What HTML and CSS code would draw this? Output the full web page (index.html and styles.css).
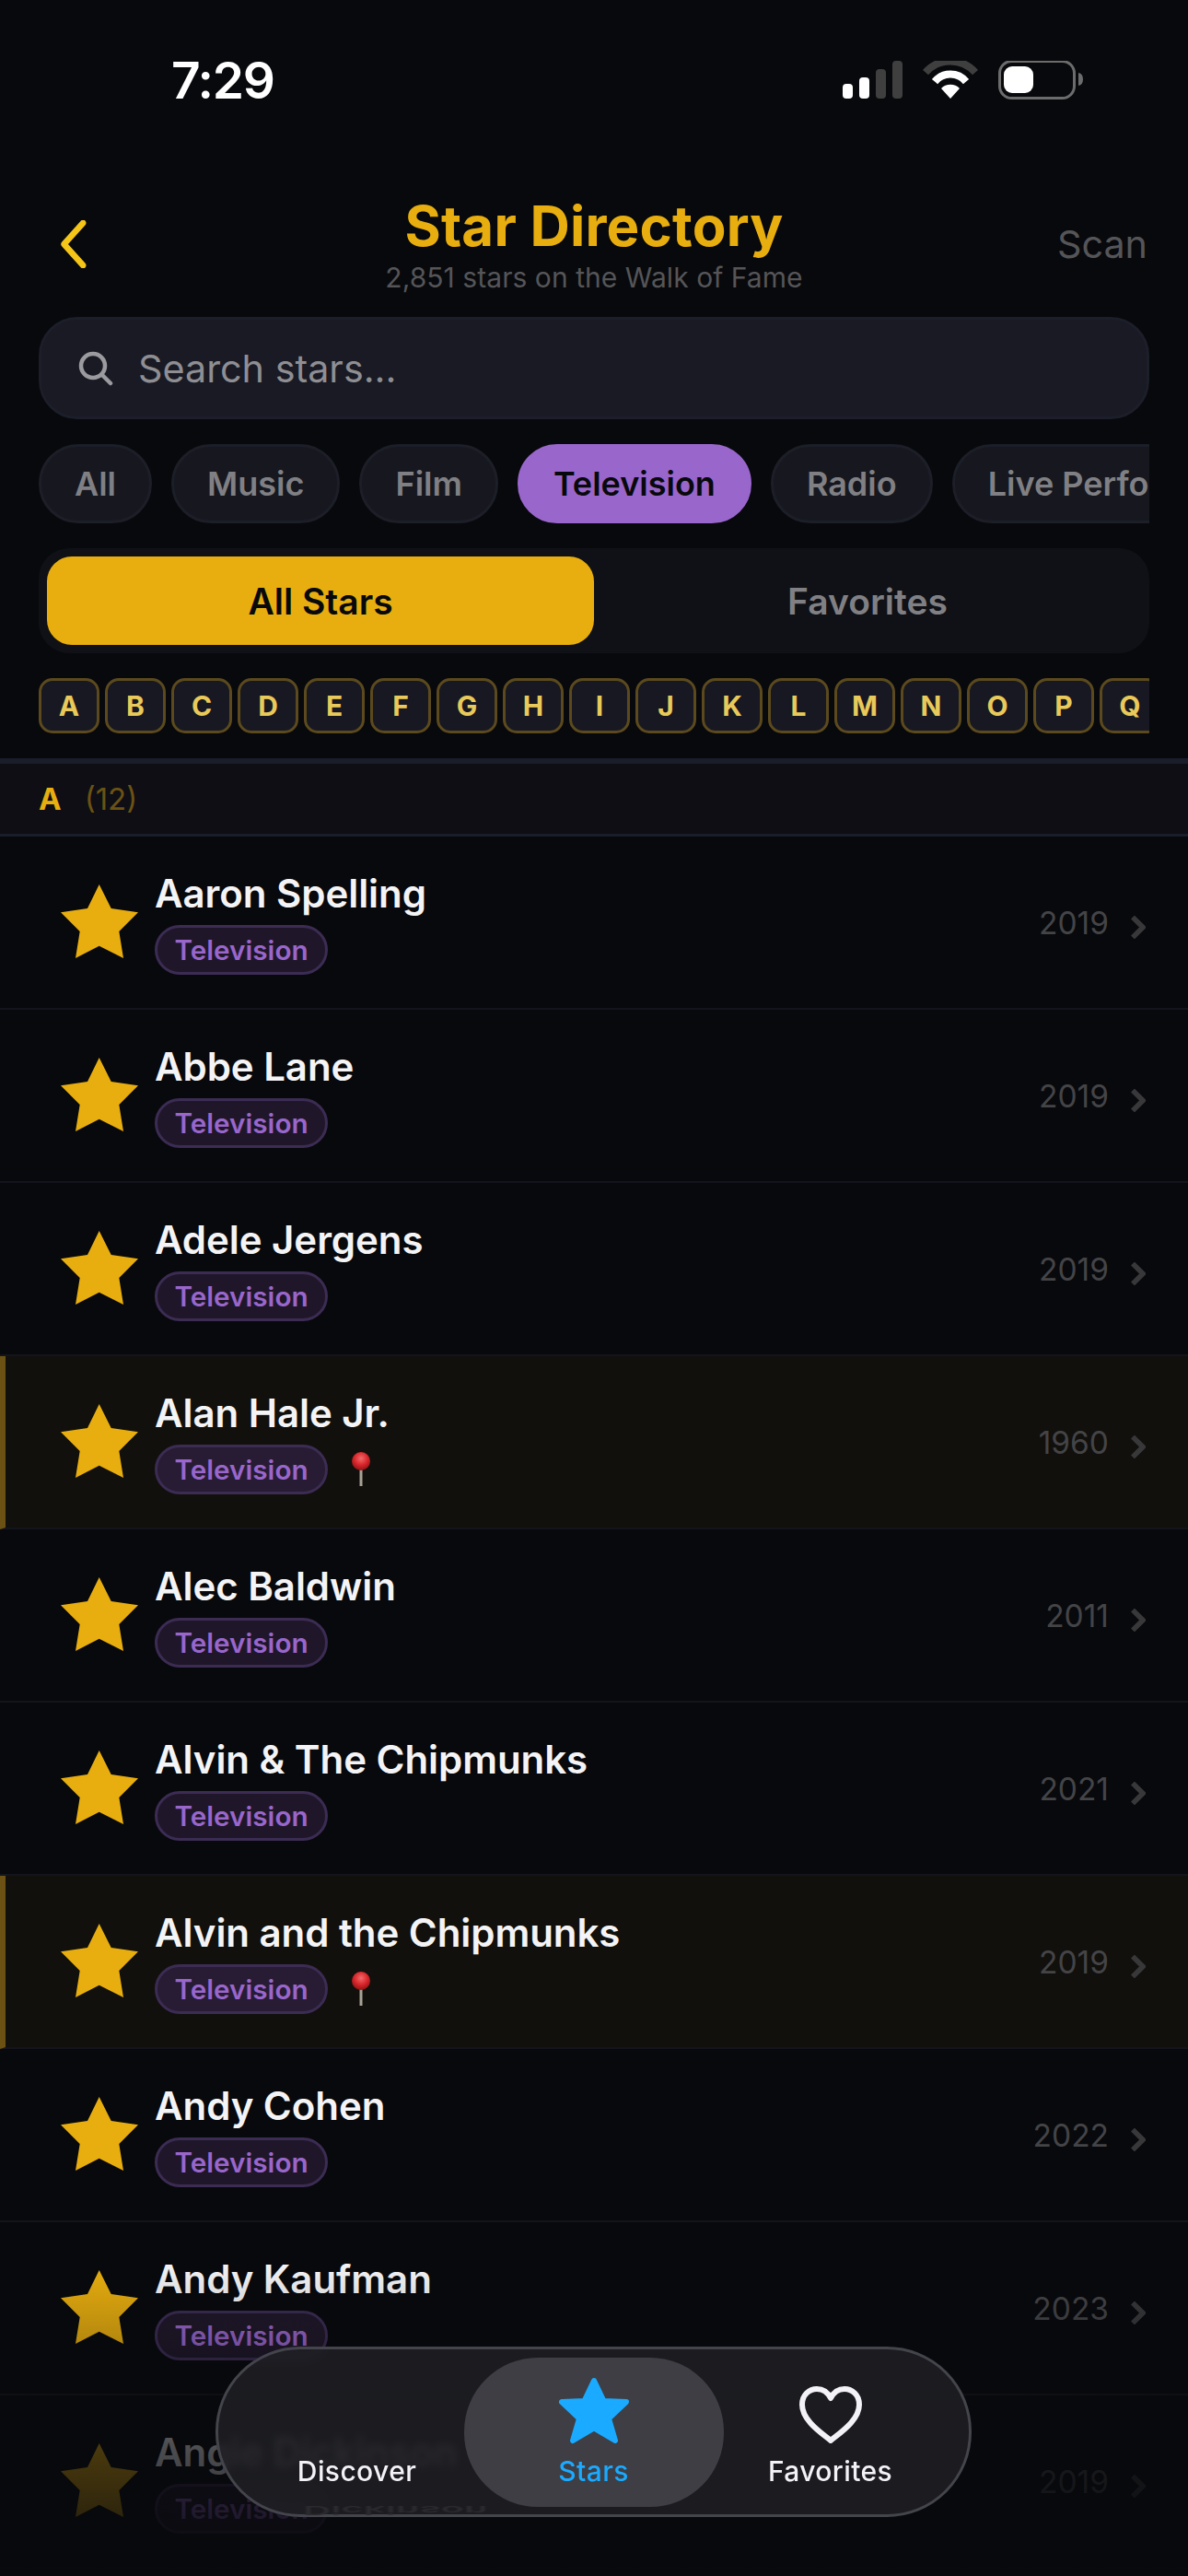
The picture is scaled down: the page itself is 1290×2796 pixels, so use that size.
FILE: index.html
```html
<!DOCTYPE html>
<html lang="en">
<head>
<meta charset="utf-8">
<title>Star Directory</title>
<link rel="stylesheet" href="styles.css">
</head>
<body>
<svg class="defs" width="0" height="0" aria-hidden="true">
  <defs>
    <symbol id="gold" viewBox="0 0 84 80"><polygon points="41.7,0 54.7,26 84,30.3 63.3,51 68,80 41.7,66.7 16,80 20.7,51 0,30.3 29,26" fill="#e8ae0f"/></symbol>
    <symbol id="chev" viewBox="0 0 16 25"><path d="M2 1.5 L13 12.5 L2 23.5" fill="none" stroke="currentColor" stroke-width="5.5"/></symbol>
    <radialGradient id="pinball" cx="0.5" cy="0.35" r="0.6"><stop offset="0" stop-color="#f26a6a"/><stop offset="0.6" stop-color="#d8262b"/><stop offset="1" stop-color="#9c1518"/></radialGradient>
    <symbol id="pin" viewBox="0 0 20 37"><rect x="8.5" y="16" width="3" height="21" fill="#a8a296"/><circle cx="10" cy="10" r="10" fill="url(#pinball)"/></symbol>
  </defs>
</svg>
<div class="screen">
  <div class="status">
    <span class="clock">7:29</span>
    <svg class="status-icons" width="262" height="44" viewBox="0 0 262 44">
      <rect x="0" y="25" width="11" height="16" rx="4" fill="#fff"/>
      <rect x="18" y="18" width="11" height="23" rx="4" fill="#fff"/>
      <rect x="36" y="9" width="11" height="32" rx="4" fill="#3f3f3f"/>
      <rect x="54" y="0" width="11" height="41" rx="4" fill="#3f3f3f"/>
      <path d="M90 12.6 A36 36 0 0 1 144 12.6" fill="none" stroke="#3f3f3f" stroke-width="8"/>
      <path d="M100 22.6 A22 22 0 0 1 134 22.6" fill="none" stroke="#fff" stroke-width="8"/>
      <path d="M117 41 L107 30 A14 14 0 0 1 127 30 Z" fill="#fff"/>
      <rect x="170.500" y="0.500" width="81" height="40" rx="13" fill="none" stroke="#6c6c6c" stroke-width="3"/>
      <rect x="175" y="6" width="32" height="29" rx="9" fill="#fff"/>
      <path d="M256 13 Q261 14 261 20 Q261 26 256 27 Z" fill="#6c6c6c"/>
    </svg>
  </div>

  <header class="head">
    <svg class="back" width="32" height="52" viewBox="0 0 32 52"><path d="M28 3 L5 26 L28 49" transform="matrix(.9 0 0 1 1 0)" fill="none" stroke="#f5c518" stroke-width="7" stroke-linecap="round" stroke-linejoin="round"/></svg>
    <div class="titles">
      <h1 class="title">Star Directory</h1>
      <p class="sub">2,851 stars on the Walk of Fame</p>
    </div>
    <span class="scan">Scan</span>
  </header>

  <div class="controls">
    <div class="search">
      <svg width="38" height="38" viewBox="0 0 38 38"><circle cx="16" cy="16" r="13" fill="none" stroke="#9a9a9f" stroke-width="4.500"/><path d="M26 26 L35 35" stroke="#9a9a9f" stroke-width="4.500" stroke-linecap="round"/></svg>
      <span>Search stars...</span>
    </div>
    <div class="chips">
      <span class="chip">All</span>
      <span class="chip">Music</span>
      <span class="chip">Film</span>
      <span class="chip chip-on">Television</span>
      <span class="chip">Radio</span>
      <span class="chip">Live Performance</span>
    </div>
    <div class="seg">
      <span class="seg-item seg-on">All Stars</span>
      <span class="seg-item">Favorites</span>
    </div>
    <div class="letters">
      <span class="letter">A</span><span class="letter">B</span><span class="letter">C</span><span class="letter">D</span><span class="letter">E</span><span class="letter">F</span><span class="letter">G</span><span class="letter">H</span><span class="letter">I</span><span class="letter">J</span><span class="letter">K</span><span class="letter">L</span><span class="letter">M</span><span class="letter">N</span><span class="letter">O</span><span class="letter">P</span><span class="letter">Q</span><span class="letter">R</span>
    </div>
  </div>

  <div class="section"><b>A</b><span>(12)</span></div>

  <ul class="rows">
    <li class="row"><svg class="star"><use href="#gold"/></svg><div class="info"><div class="name">Aaron Spelling</div><div class="meta"><span class="badge">Television</span></div></div><span class="year">2019</span><svg class="chev"><use href="#chev"/></svg></li>
    <li class="row"><svg class="star"><use href="#gold"/></svg><div class="info"><div class="name">Abbe Lane</div><div class="meta"><span class="badge">Television</span></div></div><span class="year">2019</span><svg class="chev"><use href="#chev"/></svg></li>
    <li class="row"><svg class="star"><use href="#gold"/></svg><div class="info"><div class="name">Adele Jergens</div><div class="meta"><span class="badge">Television</span></div></div><span class="year">2019</span><svg class="chev"><use href="#chev"/></svg></li>
    <li class="row row-hl"><svg class="star"><use href="#gold"/></svg><div class="info"><div class="name">Alan Hale Jr.</div><div class="meta"><span class="badge">Television</span><svg class="pin"><use href="#pin"/></svg></div></div><span class="year">1960</span><svg class="chev"><use href="#chev"/></svg></li>
    <li class="row"><svg class="star"><use href="#gold"/></svg><div class="info"><div class="name">Alec Baldwin</div><div class="meta"><span class="badge">Television</span></div></div><span class="year">2011</span><svg class="chev"><use href="#chev"/></svg></li>
    <li class="row"><svg class="star"><use href="#gold"/></svg><div class="info"><div class="name">Alvin &amp; The Chipmunks</div><div class="meta"><span class="badge">Television</span></div></div><span class="year">2021</span><svg class="chev"><use href="#chev"/></svg></li>
    <li class="row row-hl"><svg class="star"><use href="#gold"/></svg><div class="info"><div class="name">Alvin and the Chipmunks</div><div class="meta"><span class="badge">Television</span><svg class="pin"><use href="#pin"/></svg></div></div><span class="year">2019</span><svg class="chev"><use href="#chev"/></svg></li>
    <li class="row"><svg class="star"><use href="#gold"/></svg><div class="info"><div class="name">Andy Cohen</div><div class="meta"><span class="badge">Television</span></div></div><span class="year">2022</span><svg class="chev"><use href="#chev"/></svg></li>
    <li class="row"><svg class="star"><use href="#gold"/></svg><div class="info"><div class="name">Andy Kaufman</div><div class="meta"><span class="badge">Television</span></div></div><span class="year">2023</span><svg class="chev"><use href="#chev"/></svg></li>
    <li class="row"><svg class="star"><use href="#gold"/></svg><div class="info"><div class="name">Angie Dickinson</div><div class="meta"><span class="badge">Television</span></div></div><span class="year">2019</span><svg class="chev"><use href="#chev"/></svg></li>
  </ul>

  <div class="fade"></div>

  <nav class="tabbar">
    <span class="echo" aria-hidden="true">Dickinson</span>
    <div class="tab"><span class="tab-icon"></span><span class="tab-label">Discover</span></div>
    <div class="tab tab-on">
      <span class="tab-icon"><svg width="76" height="73" viewBox="0 0 76 73"><polygon points="38,4 48.500,26 73,27 54,45 61,69 38,55.500 15,69 22,45 3,27 27.500,26" fill="#1aaaff" stroke="#1aaaff" stroke-width="6" stroke-linejoin="round"/></svg></span>
      <span class="tab-label">Stars</span>
    </div>
    <div class="tab">
      <span class="tab-icon"><svg width="68" height="63" viewBox="0 0 68 63"><path d="M34 59 C26 52 3 38 3 20 C3 9 11 3 19 3 C26 3 31 7 34 13 C37 7 42 3 49 3 C57 3 65 9 65 20 C65 38 42 52 34 59 Z" fill="none" stroke="#f2f2f7" stroke-width="6" stroke-linejoin="round"/></svg></span>
      <span class="tab-label">Favorites</span>
    </div>
  </nav>
</div>
</body>
</html>
```
FILE: styles.css
```css
* { box-sizing: border-box; }
html, body { margin: 0; padding: 0; background: #08090c; }
body { font-family: Inter, "Liberation Sans", sans-serif; color: #fff; }
.defs { position: absolute; }
.screen { position: relative; width: 1290px; height: 2796px; overflow: hidden; background: #08090c; }

.status { height: 190px; display: flex; justify-content: space-between; align-items: flex-start; padding: 66px 113px 0 186px; }
.clock { font-size: 55px; font-weight: 600; line-height: 42px; letter-spacing: -1.3px; color: #fff; }

.head { height: 154px; padding: 0 42px; display: grid; grid-template-columns: 1fr auto 1fr; align-items: start; }
.back { margin: 49px 0 0 22px; }
.titles { margin-top: 25px; text-align: center; }
.title { margin: 0; font-size: 60px; line-height: 60px; font-weight: 700; letter-spacing: .2px; color: #e8ae0f; }
.sub { margin: 8px 0 0; font-size: 30px; line-height: 36px; font-weight: 400; letter-spacing: .05px; color: #555558; }
.scan { margin-top: 50px; justify-self: end; padding-right: 2px; font-size: 41.300px; line-height: 50px; color: #555558; }

.controls { padding: 0 42px; display: flex; flex-direction: column; gap: 27px; }
.search { height: 111px; display: flex; align-items: center; gap: 27px; padding: 0 40px; background: #191a23; border: 3px solid #1c1e2a; border-radius: 42px; font-size: 41.300px; color: #8e8e93; }
.chips { display: flex; gap: 21px; overflow: hidden; }
.chip { flex: none; height: 86px; display: flex; align-items: center; padding: 0 36px; background: #17181f; border: 3px solid #1c1e28; border-radius: 43px; font-size: 36px; font-weight: 600; color: #808084; }
.chip-on { background: #9966cc; border-color: #9966cc; color: #08090c; }
.seg { height: 114px; display: flex; padding: 9px; background: #101116; border-radius: 33px; }
.seg-item { flex: 1; display: flex; align-items: center; justify-content: center; border-radius: 27px; font-size: 39px; font-weight: 600; color: #808084; }
.seg-on { background: #e8ae0f; color: #08090c; }
.letters { display: flex; gap: 6px; overflow: hidden; }
.letter { flex: none; width: 66px; height: 60px; display: flex; align-items: center; justify-content: center; background: #171821; border: 3px solid #5c4a1e; border-radius: 15px; font-size: 30px; font-weight: 700; color: #e8c95a; }

.section { height: 85px; margin-top: 27px; padding: 0 42px; display: flex; align-items: center; gap: 25px; background: #0e0e14; border-top: 6px solid #1a1d2a; border-bottom: 3px solid #1a1d2a; font-size: 33px; color: #6b5214; }
.section b { font-weight: 700; color: #e8ae0f; }

.rows { list-style: none; margin: 0; padding: 0; }
.row { height: 188px; display: flex; align-items: center; gap: 18px; padding: 0 46px 0 66px; border-bottom: 2px solid #14151c; }
.row-hl { background: #11100c; border-left: 6px solid #6b5214; padding-left: 60px; }
.star { flex: none; width: 84px; height: 80px; margin-top: -3px; }
.info { flex: 1; min-width: 0; display: flex; flex-direction: column; gap: 9px; margin-top: -1px; }
.name { font-size: 42px; line-height: 51px; font-weight: 600; letter-spacing: -.05px; color: #f4f4f6; }
.meta { display: flex; align-items: center; gap: 26px; }
.badge { height: 54px; display: flex; align-items: center; padding: 0 18.500px; background: #1f1729; border: 3px solid #3c2c54; border-radius: 27px; font-size: 29.700px; font-weight: 600; color: #9966cc; }
.row-hl .badge { background: #271c33; }
.pin { width: 20px; height: 37px; flex: none; }
.year { margin: 2px 6px 0 0; font-size: 33.500px; color: #444447; }
.chev { flex: none; width: 16px; height: 25px; margin-top: 10px; color: #38383a; }

.fade { position: absolute; left: 0; right: 0; bottom: 0; height: 340px; background: linear-gradient(to bottom, rgba(8,9,12,0) 0, rgba(8,9,12,.22) 84px, rgba(8,9,12,.7) 196px, rgba(8,9,12,.83) 276px, rgba(8,9,12,.97) 340px); }

.tabbar { position: absolute; left: 234px; top: 2547px; width: 821px; height: 185px; display: flex; justify-content: center; align-items: center; background: rgba(33,33,38,.8); border: 3px solid #44444c; border-radius: 92px; -webkit-backdrop-filter: blur(4px); backdrop-filter: blur(4px); }
.echo { position: absolute; left: 92px; top: 168px; font-size: 42px; line-height: 12px; font-weight: 600; color: #2a2a2f; filter: blur(1px); transform: scaleY(-.3); }
.tab { position: relative; width: 282px; height: 162px; margin: 0 -12.500px; display: flex; flex-direction: column; align-items: center; border-radius: 80px; padding-top: 18px; }
.tab-on { background: #3e3e44; }
.tab-icon { height: 87px; display: flex; align-items: flex-end; justify-content: center; padding-bottom: 11px; }
.tab-label { font-size: 30px; line-height: 36px; font-weight: 500; letter-spacing: .4px; color: #f2f2f7; }
.tab-on .tab-label { color: #1aaaff; }
```
